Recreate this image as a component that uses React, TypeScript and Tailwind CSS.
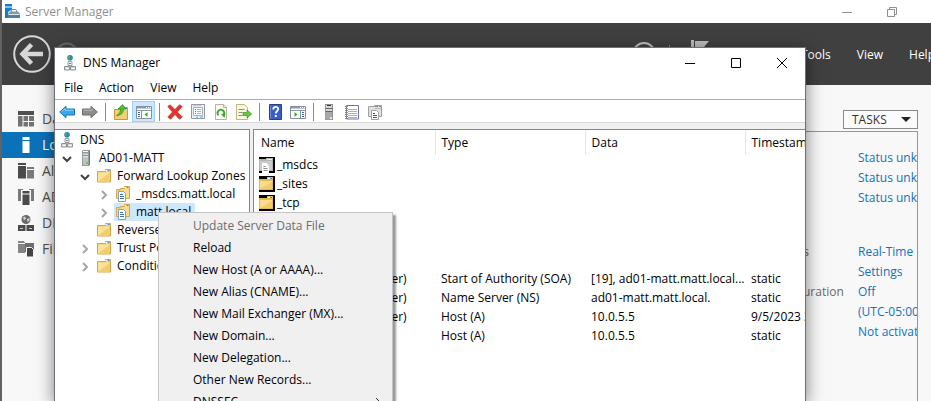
import type { ReactNode } from "react";

type Icon = () => ReactNode;

/* ---------- Window glyphs ---------- */

function Glyph({ children }: { children: ReactNode }) {
  return (
    <svg viewBox="0 0 12 12" className="size-3 fill-none stroke-current" aria-hidden="true">
      {children}
    </svg>
  );
}

const MinimizeGlyph = () => (
  <Glyph>
    <path d="M1 6.500h10" />
  </Glyph>
);
const MaximizeGlyph = () => (
  <Glyph>
    <path d="M1.500 1.500h9v9h-9z" />
  </Glyph>
);
const RestoreGlyph = () => (
  <Glyph>
    <path d="M1.500 3.500h7v7h-7zM3.500 3.500v-2h7v7h-2" />
  </Glyph>
);
const CloseGlyph = () => (
  <Glyph>
    <path d="M1 1l10 10M11 1L1 11" />
  </Glyph>
);

/* ---------- 16px icons ---------- */

function Svg({ children }: { children: ReactNode }) {
  return (
    <svg viewBox="0 0 16 16" className="size-4 shrink-0" aria-hidden="true">
      {children}
    </svg>
  );
}

const ServerManagerIcon = () => (
  <Svg>
    <path d="M0 0h7v2.500H0zM0 3.500h7v2L3 8v6H0z" fill="#0f7fd0" />
    <path d="M6.500 8V6.500a1 1 0 0 1 1-1h3a1 1 0 0 1 1 1V8" fill="none" stroke="#5f7f96" />
    <path d="M3 9.500L5 7.500h8l2 2v1.500H3z" fill="#7d9aae" />
    <path d="M3 10.500h12V14H3z" fill="#5a7c94" />
    <path d="M3.500 10.500h11" stroke="#dfe9f0" />
  </Svg>
);

const DnsIcon = () => (
  <Svg>
    <circle cx="8" cy="2.800" r="2.800" fill="#2a7fc4" />
    <path d="M6.200 1.200c1.500-1 2.300 0 1.800 1s-1 1 0 2c-2 .5-2.800-1-1.800-3zM9.500 2.200l1.200 1-1 1.300z" fill="#4cb848" />
    <path d="M6 6.500h4v4H6z" fill="#eef0f2" stroke="#9a9fa4" />
    <path d="M7 8.500h2M8 10.500v1" stroke="#7b8085" />
    <path d="M2.500 11.500h5v3.500h-5zM8.500 11.500h5v3.500h-5z" fill="#d5d9dc" stroke="#8f9499" />
    <path d="M4 13.500h2.500M10 13.500h2.500" stroke="#fff" />
  </Svg>
);

const ServerIcon = () => (
  <Svg>
    <path d="M4 1l1-.8h7V15L10.500 16H4z" fill="#73787c" />
    <path d="M4.500 1H10.500v14.500h-6z" fill="#bcc1c5" />
    <path d="M5 1.500h5M5 4.200h5M5 6.800h5" stroke="#f4f5f6" />
    <path d="M5 2.800h5M5 5.400h5" stroke="#6f7478" strokeWidth=".7" />
    <rect x="8" y="12" width="2" height="2" fill="#69d02c" />
  </Svg>
);

const TowerIcon = () => (
  <Svg>
    <path d="M4 0h8v16H4z" fill="#8f8f8f" />
    <path d="M4.500 1H11v14.500H4.500z" fill="#a9a9a9" />
    <path d="M5 1h6v3H5zM5 5h6v2H5z" fill="#d8d8d8" />
    <path d="M6 1.500h4" stroke="#333" />
    <path d="M4.500 4.500h7M4.500 7.500h7" stroke="#666" />
    <rect x="9" y="13" width="2" height="2" fill="#e9e9e9" />
  </Svg>
);

const FolderIcon = () => (
  <Svg>
    <path d="M1.500 3.500h8v-2h5v12.500h-13z" fill="#f3d074" stroke="#d0a74a" />
    <path d="M2 4.500h11v9H2z" fill="#fbe19a" />
    <path d="M2 13.500l11-8v8z" fill="#f2cd70" />
    <path d="M9.500 2.500h2.500" stroke="#fff" />
    <path d="M11.500 2.500h2" stroke="#3c93d8" />
  </Svg>
);

const ZoneIcon = () => (
  <Svg>
    <path d="M1.500 3.500h4v-1h4v-2h5v12H1.500z" fill="#f8dc8d" stroke="#d0a74a" />
    <path d="M4 3.500v8" stroke="#dcb75c" />
    <path d="M9.500 1.500h2.500" stroke="#fff" />
    <path d="M11.500 1.500h2" stroke="#3c93d8" />
    <path d="M3.500 5.500h5l2 2v8h-7z" fill="#fff" stroke="#8aa0b8" />
    <path d="M5 8.500h3M5 10.500h4M5 12.500h4" stroke="#3f6fa8" />
  </Svg>
);

const GreyZoneIcon = () => (
  <Svg>
    <path d="M1.500 2.500h6v-1h7v11h-13z" fill="#e2e2e2" stroke="#a0a0a0" />
    <path d="M8 2.500h3M12 2.500h2" stroke="#8a8a8a" />
    <path d="M8 4.500h6" stroke="#bdbdbd" />
    <path d="M4.500 6.500h5l2 2v7h-7z" fill="#fff" stroke="#a0a0a0" />
    <path d="M6 9.500h2M6 11.500h4M6 13.500h4" stroke="#555" />
  </Svg>
);

const ListFolderIcon = () => (
  <Svg>
    <path d="M0 0h16v16H0z" fill="#000" />
    <path d="M0 3h8V1h6v13H0z" fill="#e5b956" />
    <path d="M1 5h12v8H1z" fill="#fadd8a" />
    <path d="M1 13l12-7v7z" fill="#f1cc6c" />
    <path d="M9 2.500h2" stroke="#fff" />
    <path d="M11 2.500h2" stroke="#3c93d8" />
  </Svg>
);

const ListZoneIcon = () => (
  <Svg>
    <path d="M0 0h16v16H0z" fill="#000" />
    <path d="M0 2h7V1h7v13H0z" fill="#b5b5b5" />
    <path d="M1 4h12v9H1z" fill="#cbcbcb" />
    <path d="M8 2.500h5" stroke="#ededed" />
    <path d="M3 6h4.500L10 8.500V16H3z" fill="#fff" />
    <path d="M4.500 9.500h2M4.500 11.500h4M4.500 13.500h4" stroke="#8a8a8a" />
  </Svg>
);

const BackIcon = () => (
  <Svg>
    <path d="M.7 8L7 2.300V5h8.500v6H7v2.700z" fill="#35a9ea" stroke="#1c70b4" />
    <path d="M2.500 7.800L6 4.500V6.200h8.500" fill="none" stroke="#8fd4f8" />
  </Svg>
);
const ForwardIcon = () => (
  <Svg>
    <path d="M15.300 8L9 2.300V5H.5v6H9v2.700z" fill="#8d8d8d" stroke="#6a6a6a" />
    <path d="M1.500 6.200H10V4.500" fill="none" stroke="#bcbcbc" />
  </Svg>
);
const FolderUpIcon = () => (
  <Svg>
    <path d="M1.500 5.500h7v-2h6v12h-13z" fill="#f3d074" stroke="#c59b3a" />
    <path d="M11 4.500h3" stroke="#3c93d8" />
    <path d="M3.500 11.500C6.500 10 7.500 7.500 7.500 5H5l4.500-4.500L13 5h-2.500c0 4-2.500 6.500-7 6.500z" fill="#52c02f" stroke="#2f8f1c" strokeWidth=".7" />
  </Svg>
);

function PanelFrame({ children }: { children: ReactNode }) {
  return (
    <Svg>
      <path d="M.5 2.500h15v12H.5z" fill="#fff" stroke="#8590a0" />
      <path d="M1 3h14v1.500H1z" fill="#8b98ad" />
      <path d="M10 3.500h1M12 3.500h1M14 3.500h1" stroke="#fff" />
      <path d="M1 6.500h14" stroke="#8b98ad" />
      {children}
    </Svg>
  );
}
const TreePanelIcon = () => (
  <PanelFrame>
    <path d="M5.500 7v7" stroke="#8590a0" />
    <path d="M2 8.500h2M2 10.500h2M2 12.500h2" stroke="#3f6fa8" />
    <path d="M11.500 8v5l-3-2.500z" fill="#2fae21" />
  </PanelFrame>
);
const ActionPanelIcon = () => (
  <PanelFrame>
    <path d="M10.500 7v7" stroke="#8590a0" />
    <path d="M12 8.500h2M12 10.500h2M12 12.500h2" stroke="#3f6fa8" />
    <path d="M4.500 8v5l3-2.500z" fill="#2fae21" />
  </PanelFrame>
);
const DeleteIcon = () => (
  <Svg>
    <path d="M.8 2.500L3 .8 8 5.500 12.500.8l2.700 1.700L10.300 8l5 5-2.800 2.200L8 10.500l-4.500 4.700L.8 13l4.700-5z" fill="#e5342b" stroke="#c2382f" strokeWidth=".8" />
  </Svg>
);
const PropertiesIcon = () => (
  <Svg>
    <path d="M1.500.5h13v14h-13z" fill="#eef2f6" stroke="#8e9aa6" />
    <path d="M3.500 3.500h9v8h-9z" fill="#fff" stroke="#a8b3be" />
    <path d="M3 1.800h8" stroke="#b9c3cd" />
    <path d="M5 5.500h1M5 7.500h1M5 9.500h1" stroke="#3b7fc0" />
    <path d="M7 5.500h4M7 7.500h4M7 9.500h4" stroke="#9db7cf" />
    <path d="M6 13h2M10 13h3" stroke="#5aa9d8" />
  </Svg>
);
const RefreshIcon = () => (
  <Svg>
    <path d="M2.500.5h8l3 3v12h-11z" fill="#fbfaf3" stroke="#b9b49c" />
    <path d="M10.500.5v3h3" fill="none" stroke="#b9b49c" />
    <path d="M5.500 11.300a3.300 3.300 0 1 1 5.300-.8" fill="none" stroke="#38a832" strokeWidth="1.800" />
    <path d="M8 10l4.500-.5-1 4.500z" fill="#38a832" />
  </Svg>
);
const ExportIcon = () => (
  <Svg>
    <path d="M.5.5h8l3 3v12H.5z" fill="#fcf6dc" stroke="#c5b67e" />
    <path d="M2.500 5.500h6M2.500 8.500h4M2.500 11.500h4" stroke="#8d8d8d" />
    <path d="M7 8.500h4V6l4.700 4-4.700 4v-2.500H7z" fill="#63c83c" stroke="#3d9b22" strokeWidth=".7" />
  </Svg>
);
const HelpIcon = () => (
  <Svg>
    <path d="M2.500.5h12v15h-12z" fill="#3a5fc4" stroke="#22408f" />
    <path d="M3.500 1v14" stroke="#6d8be0" />
    <path d="M6.200 5.500c0-3.500 5-3.500 5-.4C11.200 7 8.800 7 8.800 9.500" fill="none" stroke="#fff" strokeWidth="1.800" />
    <rect x="7.800" y="11" width="2" height="2" fill="#fff" />
  </Svg>
);
const NotebookIcon = () => (
  <Svg>
    <path d="M2.500 1.500h12v13.500h-12z" fill="#fff" stroke="#6b75b5" />
    <path d="M4 5.500h9M4 7.500h9M4 9.500h9M4 11.500h9M4 13.500h9" stroke="#8db8de" />
    <path d="M1 2.500h3M1 4.500h3M1 6.500h3M1 8.500h3M1 10.500h3M1 12.500h3M1 14.500h3" stroke="#8a8a8a" />
  </Svg>
);

/* Sidebar icons */
const DashboardIcon = () => (
  <Svg>
    <path d="M0 0h16v4H0z" fill="#505050" />
    <path d="M0 5h4.500v10.500H0zM5.500 5h4.500v5H5.500zM11 5h5v5h-5zM5.500 11h4.500v4.500H5.500zM11 11h5v4.500h-5z" fill="#747474" />
  </Svg>
);
const LocalServerIcon = () => (
  <Svg>
    <path d="M4.500 0h7v3h-7zM4.500 4h7v12h-7z" fill="#fff" />
  </Svg>
);
const AllServersIcon = () => (
  <Svg>
    <path d="M0 0h8v2H0zM0 3h8v12.500H0z" fill="#4b4b4b" />
    <path d="M9 4h7v2H9zM9 7h7v8.500H9z" fill="#7a7a7a" />
  </Svg>
);
const AdDsIcon = () => (
  <Svg>
    <path d="M0 0h5v1H3v11H0zM11 0h5v12h-3V1h-2z" fill="#7a7a7a" />
    <path d="M4.500 2h7v2.500h-7zM4.500 5.500h7V16h-7z" fill="#4b4b4b" />
  </Svg>
);
const DnsNavIcon = () => (
  <Svg>
    <circle cx="8" cy="4.500" r="4.500" fill="#6a6a6a" />
    <path d="M5 2.500l2-1 1 2-2 2zM9 4l2.500-1v2.500L9.500 7z" fill="#d5d5d5" />
    <path d="M0 10h7.500v6H0zM8.500 10H16v6H8.500z" fill="#4b4b4b" />
    <path d="M2 13.500h3M11 13.500h3" stroke="#ccc" />
  </Svg>
);
const FileNavIcon = () => (
  <Svg>
    <path d="M0 0h6l1 2H0zM0 3h7v9H0z" fill="#858585" />
    <path d="M7 2h9v9H7z" fill="#6d6d6d" />
    <path d="M8.500 6.500h5l2 2V16h-7z" fill="#444" stroke="#f8f8f8" />
  </Svg>
);

/* ---------- Server Manager ---------- */

const NAV: { label: string; icon: Icon; active?: boolean }[] = [
  { label: "Dashboard", icon: DashboardIcon },
  { label: "Local Server", icon: LocalServerIcon, active: true },
  { label: "All Servers", icon: AllServersIcon },
  { label: "AD DS", icon: AdDsIcon },
  { label: "DNS", icon: DnsNavIcon },
  { label: "File and Storage Services", icon: FileNavIcon },
];

const UPDATE_STATUS = ["Status unknown", "Status unknown", "Status unknown"];
const PROPERTIES: [string, string][] = [
  ["Microsoft Defender Antivirus", "Real-Time Protection: On"],
  ["Feedback & Diagnostics", "Settings"],
  ["IE Enhanced Security Configuration", "Off"],
  ["Time zone", "(UTC-05:00) Eastern Time"],
  ["Product ID", "Not activated"],
];

function PropertyRow({ label, value }: { label: string; value: string }) {
  return (
    <div className="flex h-5 items-center">
      <dt className="w-[210px] shrink-0 text-[#6a6a6a]">{label}</dt>
      <dd>
        <a href="#property" className="text-[#1272ba]">
          {value}
        </a>
      </dd>
    </div>
  );
}

function ServerManager() {
  return (
    <div className="flex h-full flex-col border-l-2 border-[#626262] bg-[#f8f8f8]">
      <header className="flex h-[23px] shrink-0 items-center bg-white pl-[3px] text-[#8f8f8f]">
        <ServerManagerIcon />
        <span className="grow pl-1 text-[12px]">Server Manager</span>
        <button aria-label="Minimize" className="flex h-5 w-[45px] items-center justify-center">
          <MinimizeGlyph />
        </button>
        <button aria-label="Restore" className="mr-[17px] flex h-5 w-[45px] items-center justify-center">
          <RestoreGlyph />
        </button>
      </header>

      <div className="flex h-[62px] shrink-0 items-center bg-[#404040] pl-[11px] text-[12px] text-white">
        <button aria-label="Back">
          <svg viewBox="0 0 38 38" className="size-[38px] fill-none stroke-[#d8d8d8]">
            <circle cx="19" cy="19" r="17.800" strokeWidth="2" />
            <path d="M9 19h21" strokeWidth="4.500" />
            <path d="M18.500 9.500L9.500 19l9 9.500" strokeWidth="4.500" />
          </svg>
        </button>
        <button aria-label="Forward" className="ml-1">
          <svg viewBox="0 0 24 24" className="size-6 fill-none stroke-[#6a6a6a]">
            <circle cx="12" cy="12" r="10.500" strokeWidth="2" />
          </svg>
        </button>
        <div className="flex grow items-center justify-end gap-[13px] pr-[92px]">
          <button aria-label="Refresh">
            <svg viewBox="0 0 24 24" className="size-6 fill-none stroke-[#c0c0c0]">
              <circle cx="12" cy="11.500" r="10.500" strokeWidth="2" />
            </svg>
          </button>
          <span className="h-[18px] w-px bg-[#8a8a8a]" />
          <button aria-label="Notifications" className="ml-2">
            <svg viewBox="0 0 18 28" className="h-7 w-[18px] fill-[#bdbdbd]">
              <path d="M0 0h3v28H0zM4 1h14l-5 6 5 6H4z" />
            </svg>
          </button>
        </div>
        <nav className="flex w-[130px] shrink-0 gap-[26px] whitespace-nowrap pt-[2px]">
          <button>Tools</button>
          <button>View</button>
          <button>Help</button>
        </nav>
      </div>

      <div className="flex grow">
        <ul className="w-[190px] shrink-0 pt-[21px] text-[14px]">
          {NAV.map(({ label, icon: NavIcon, active }) => (
            <li key={label}>
              <a
                href="#nav"
                className={
                  active
                    ? "flex h-[26px] items-center gap-2 whitespace-nowrap bg-[#0b72ba] pl-4 text-white"
                    : "flex h-[26px] items-center gap-2 whitespace-nowrap pl-4 text-[#505050]"
                }
              >
                <NavIcon />
                {label}
              </a>
            </li>
          ))}
        </ul>
        <main className="flex grow flex-col items-end pr-[13px] pt-[25px] text-[12px]">
          <button className="flex h-[19px] w-[75px] items-center justify-between border border-[#8a8a8a] bg-[#fbfbfb] pl-2 pr-1.5 text-[#333]">
            TASKS
            <svg viewBox="0 0 10 5" className="h-[5px] w-2.5 fill-[#222]" aria-hidden="true">
              <path d="M0 0h10L5 5z" />
            </svg>
          </button>
          <section className="mt-[2px] w-[300px] grow overflow-hidden whitespace-nowrap border-r border-t border-[#979797] pl-[30px] pt-4">
            <dl>
              {UPDATE_STATUS.map((value, i) => (
                <PropertyRow key={i} label="" value={value} />
              ))}
              <div className="h-[34px]" />
              {PROPERTIES.map(([label, value]) => (
                <PropertyRow key={label} label={label} value={value} />
              ))}
            </dl>
          </section>
        </main>
      </div>
    </div>
  );
}

/* ---------- DNS Manager ---------- */

const TOOLBAR: { label: string; icon: Icon; pressed?: boolean }[][] = [
  [
    { label: "Back", icon: BackIcon },
    { label: "Forward", icon: ForwardIcon },
  ],
  [
    { label: "Up One Level", icon: FolderUpIcon },
    { label: "Show/Hide Console Tree", icon: TreePanelIcon, pressed: true },
  ],
  [
    { label: "Delete", icon: DeleteIcon },
    { label: "Properties", icon: PropertiesIcon },
    { label: "Refresh", icon: RefreshIcon },
    { label: "Export List", icon: ExportIcon },
  ],
  [
    { label: "Help", icon: HelpIcon },
    { label: "Show/Hide Action Pane", icon: ActionPanelIcon },
  ],
  [
    { label: "New Server", icon: TowerIcon },
    { label: "Filter", icon: NotebookIcon },
    { label: "New Zone", icon: GreyZoneIcon },
  ],
];

type TreeNode = {
  label: string;
  icon: Icon;
  indent: string;
  state?: "open" | "closed";
  selected?: boolean;
};

const TREE: TreeNode[] = [
  { label: "AD01-MATT", icon: ServerIcon, indent: "pl-1", state: "open" },
  { label: "Forward Lookup Zones", icon: FolderIcon, indent: "pl-[22px]", state: "open" },
  { label: "_msdcs.matt.local", icon: ZoneIcon, indent: "pl-[41px]", state: "closed" },
  { label: "matt.local", icon: ZoneIcon, indent: "pl-[41px]", state: "closed", selected: true },
  { label: "Reverse Lookup Zones", icon: FolderIcon, indent: "pl-[22px]" },
  { label: "Trust Points", icon: FolderIcon, indent: "pl-[22px]", state: "closed" },
  { label: "Conditional Forwarders", icon: FolderIcon, indent: "pl-[22px]", state: "closed" },
];

function Chevron({ state }: { state?: "open" | "closed" }) {
  return (
    <svg viewBox="0 0 16 16" className="size-4 shrink-0 fill-none" strokeWidth="2" aria-hidden="true">
      {state === "open" && <path d="M4 7l4 4 4-4" stroke="#404040" />}
      {state === "closed" && <path d="M6 5l4 4-4 4" stroke="#a6a6a6" />}
    </svg>
  );
}

const RECORDS: { name: string; icon: Icon; type?: string; data?: string; stamp?: string }[] = [
  { name: "_msdcs", icon: ListZoneIcon },
  { name: "_sites", icon: ListFolderIcon },
  { name: "_tcp", icon: ListFolderIcon },
  { name: "_udp", icon: ListFolderIcon },
  { name: "DomainDnsZones", icon: ListFolderIcon },
  { name: "ForestDnsZones", icon: ListFolderIcon },
  { name: "(same as parent folder)", icon: ListZoneIcon, type: "Start of Authority (SOA)", data: "[19], ad01-matt.matt.local...", stamp: "static" },
  { name: "(same as parent folder)", icon: ListZoneIcon, type: "Name Server (NS)", data: "ad01-matt.matt.local.", stamp: "static" },
  { name: "(same as parent folder)", icon: ListZoneIcon, type: "Host (A)", data: "10.0.5.5", stamp: "9/5/2023 3:00:00 PM" },
  { name: "ad01-matt", icon: ListZoneIcon, type: "Host (A)", data: "10.0.5.5", stamp: "static" },
];

const MENU = [
  "Update Server Data File",
  "Reload",
  "New Host (A or AAAA)...",
  "New Alias (CNAME)...",
  "New Mail Exchanger (MX)...",
  "New Domain...",
  "New Delegation...",
  "Other New Records...",
  "DNSSEC",
];

const WINDOW_BUTTONS: { label: string; glyph: Icon }[] = [
  { label: "Minimize", glyph: MinimizeGlyph },
  { label: "Maximize", glyph: MaximizeGlyph },
  { label: "Close", glyph: CloseGlyph },
];

function DnsManager() {
  return (
    <div className="absolute bottom-0 left-[54px] right-[125px] top-[47px] flex flex-col border-x border-t border-[#6c7078] bg-white text-[12px] text-black shadow-[0_4px_16px_rgba(0,0,0,0.5)]">
      <header className="flex h-[29px] shrink-0 items-center pl-[7px]">
        <DnsIcon />
        <h1 className="grow pl-[5px]">DNS Manager</h1>
        {WINDOW_BUTTONS.map(({ label, glyph: ButtonGlyph }) => (
          <button key={label} aria-label={label} className="flex h-full w-[46px] items-center justify-center">
            <ButtonGlyph />
          </button>
        ))}
      </header>
      <nav className="flex h-[22px] shrink-0 items-center pl-px">
        {["File", "Action", "View", "Help"].map((label) => (
          <button key={label} className="px-2">
            {label}
          </button>
        ))}
      </nav>
      <div className="flex h-6 shrink-0 items-stretch border-y border-b-[#d9d9d9] border-t-[#a8adaf] pt-px">
        {TOOLBAR.map((group, i) => (
          <div key={i} className="flex items-center">
            {i > 0 && (
              <span className="flex w-2 justify-center">
                <span className="h-[18px] w-px bg-[#8c8c8c]" />
              </span>
            )}
            {group.map(({ label, icon: ToolIcon, pressed }) => (
              <button
                key={label}
                aria-label={label}
                className={
                  pressed
                    ? "flex h-full w-[23px] items-center justify-center border border-[#99d1ff] bg-[#cce8ff]"
                    : "flex h-full w-[23px] items-center justify-center"
                }
              >
                <ToolIcon />
              </button>
            ))}
          </div>
        ))}
      </div>

      <div className="flex min-h-0 grow gap-[3px] bg-[#f0f0f0] pt-1.5">
        <ul className="w-[195px] shrink-0 overflow-hidden border-r border-t border-[#828790] bg-white pt-px">
          <li className="flex h-[18px] items-center pl-1">
            <DnsIcon />
            <span className="pl-[5px]">DNS</span>
          </li>
          {TREE.map(({ label, icon: NodeIcon, indent, state, selected }) => (
            <li key={label} className={indent}>
              <div className="flex h-[18px] items-center whitespace-nowrap">
                <Chevron state={state} />
                <span
                  className={
                    selected
                      ? "ml-[2px] flex h-full items-center gap-[5px] bg-[#cce8ff] pl-px pr-1"
                      : "ml-[2px] flex h-full items-center gap-[5px] pl-px pr-1"
                  }
                >
                  <NodeIcon />
                  {label}
                </span>
              </div>
            </li>
          ))}
        </ul>

        <div className="min-w-0 grow overflow-hidden border-l border-t border-[#828790] bg-white">
          <table className="w-full table-fixed whitespace-nowrap text-left">
            <thead>
              <tr className="h-[25px]">
                <th className="w-[181px] border-r border-[#e5e5e5] pl-[7px] font-normal">Name</th>
                <th className="w-[150px] border-r border-[#e5e5e5] pl-1.5 font-normal">Type</th>
                <th className="w-[160px] border-r border-[#e5e5e5] pl-1.5 font-normal">Data</th>
                <th className="overflow-hidden pl-1.5 font-normal">Timestamp</th>
              </tr>
            </thead>
            <tbody>
              {RECORDS.map(({ name, icon: RowIcon, type, data, stamp }, i) => (
                <tr key={i} className="h-[19px]">
                  <td className="p-0 pl-[5px]">
                    <span className="flex items-center gap-[2px]">
                      <RowIcon />
                      {name}
                    </span>
                  </td>
                  <td className="p-0 pl-1.5">{type}</td>
                  <td className="p-0 pl-1.5">{data}</td>
                  <td className="overflow-hidden p-0 pl-1.5">{stamp}</td>
                </tr>
              ))}
            </tbody>
          </table>
        </div>
      </div>
    </div>
  );
}

function ContextMenu() {
  return (
    <ul
      role="menu"
      className="absolute left-[158px] top-[212px] w-[235px] border border-[#c4c4c4] bg-[#f0f0f0] py-[2px] text-[12px] shadow-[3px_3px_2px_rgba(0,0,0,0.4)]"
    >
      {MENU.map((label, i) => (
        <li key={label} role="none">
          <button
            role="menuitem"
            disabled={i === 0}
            className="flex h-[22px] w-full items-center justify-between pl-[34px] pr-2.5 text-black disabled:text-[#6d6d6d]"
          >
            {label}
            {label === "DNSSEC" && (
              <svg viewBox="0 0 8 8" className="size-2 fill-none stroke-[#333]" aria-hidden="true">
                <path d="M2 0l4 4-4 4" />
              </svg>
            )}
          </button>
        </li>
      ))}
    </ul>
  );
}

export default function App() {
  return (
    <div className="relative h-screen overflow-hidden font-['Open_Sans','Noto_Sans',sans-serif] leading-4">
      <ServerManager />
      <DnsManager />
      <ContextMenu />
    </div>
  );
}
